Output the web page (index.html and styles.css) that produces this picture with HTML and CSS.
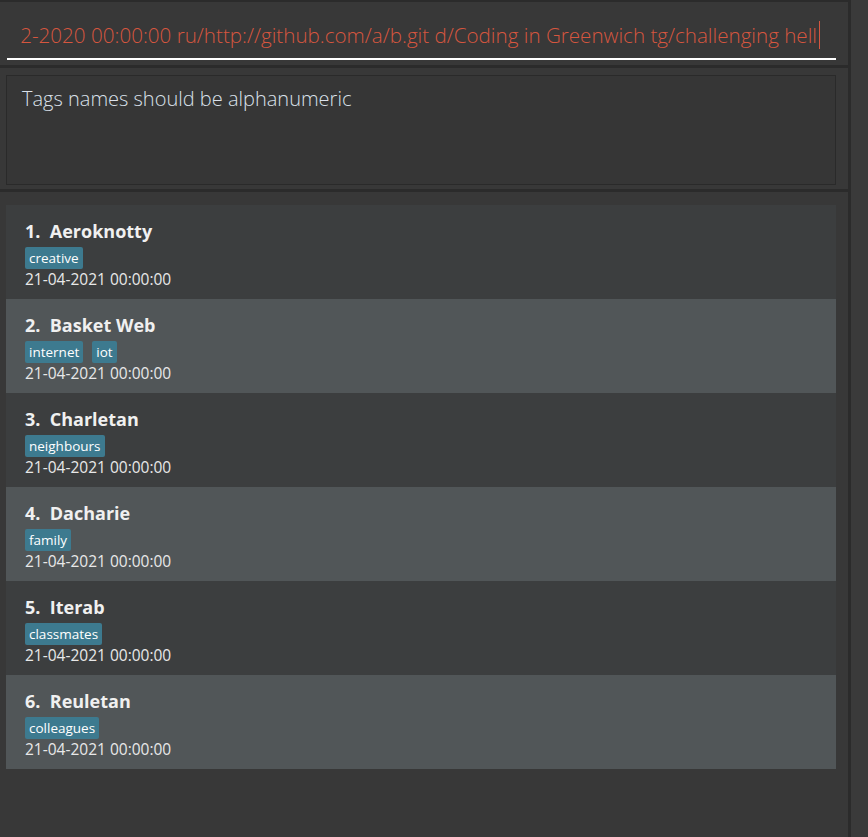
FILE: index.html
```html
<!DOCTYPE html>
<html>
<head>
<meta charset="utf-8">
<link rel="stylesheet" href="styles.css">
</head>
<body>
<div class="app">
  <div class="main">
    <div class="panel command-panel">
      <div class="command-box">
        <div class="command-text"><span>edit 1 n/Hello dl/01-02-2020 00:00:00 ru/http://github.com/a/b.git d/Coding in Greenwich tg/challenging hell</span><span class="caret"></span></div>
      </div>
    </div>
    <div class="panel result-panel">
      <div class="result-box">Tags names should be alphanumeric</div>
    </div>
    <div class="panel list-panel">
      <div class="list">
        <div class="card odd">
          <div class="name">1.&nbsp; Aeroknotty</div>
          <div class="tags"><span class="tag">creative</span></div>
          <div class="date">21-04-2021 00:00:00</div>
        </div>
        <div class="card even">
          <div class="name">2.&nbsp; Basket Web</div>
          <div class="tags"><span class="tag">internet</span><span class="tag">iot</span></div>
          <div class="date">21-04-2021 00:00:00</div>
        </div>
        <div class="card odd">
          <div class="name">3.&nbsp; Charletan</div>
          <div class="tags"><span class="tag">neighbours</span></div>
          <div class="date">21-04-2021 00:00:00</div>
        </div>
        <div class="card even">
          <div class="name">4.&nbsp; Dacharie</div>
          <div class="tags"><span class="tag">family</span></div>
          <div class="date">21-04-2021 00:00:00</div>
        </div>
        <div class="card odd">
          <div class="name">5.&nbsp; Iterab</div>
          <div class="tags"><span class="tag">classmates</span></div>
          <div class="date">21-04-2021 00:00:00</div>
        </div>
        <div class="card even">
          <div class="name">6.&nbsp; Reuletan</div>
          <div class="tags"><span class="tag">colleagues</span></div>
          <div class="date">21-04-2021 00:00:00</div>
        </div>
      </div>
    </div>
  </div>
  <div class="divider"></div>
  <div class="side"></div>
</div>
</body>
</html>
```

FILE: styles.css
```css
html, body {
  margin: 0;
  padding: 0;
  height: 100%;
  background: #383838;
  font-family: "Open Sans", "Noto Sans", sans-serif;
}

.app {
  display: flex;
  height: 837px;
  overflow: hidden;
}

.main {
  width: 848px;
  display: flex;
  flex-direction: column;
  background: #2b2b2b;
}

.divider {
  width: 3px;
  background: #2b2b2b;
}

.side {
  flex: 1;
  background: #3a3a3a;
}

.panel {
  background: #383838;
}

.command-panel {
  margin-top: 2px;
  height: 63px;
  padding: 0 12px 0 7px;
  box-sizing: border-box;
}

.command-box {
  height: 58px;
  border-bottom: 2px solid #ffffff;
  display: flex;
  align-items: center;
  overflow: hidden;
  box-sizing: border-box;
  padding-top: 10px;
  padding-left: 13px;
}

.command-text {
  display: flex;
  align-items: center;
  justify-content: flex-end;
  width: 800px;
  white-space: nowrap;
  overflow: hidden;
  color: #d6563f;
  font-size: 20.6px;
  font-weight: 300;
}

.command-text span:first-child {
  flex-shrink: 0;
}

.caret {
  flex-shrink: 0;
  width: 1px;
  height: 28px;
  background: #d6563f;
  margin-left: 2px;
}

.result-panel {
  margin-top: 3px;
  height: 121px;
  padding: 7px 12px 5px 6px;
  box-sizing: border-box;
}

.result-box {
  height: 110px;
  box-sizing: border-box;
  border: 1px solid #2a2a2a;
  background: #363636;
  color: #dae1ea;
  font-size: 20px;
  font-weight: 300;
  padding: 9px 15px;
}

.list-panel {
  margin-top: 3px;
  flex: 1;
  padding: 13px 12px 0 6px;
}

.list {
  display: flex;
  flex-direction: column;
}

.card {
  height: 94px;
  box-sizing: border-box;
  padding: 13px 19px 0;
  color: #f0f0f0;
}

.card.odd {
  background: #3c3e3f;
}

.card.even {
  background: #515658;
}

.name {
  font-size: 18px;
  font-weight: 700;
  line-height: 26px;
}

.tags {
  display: flex;
  gap: 9px;
  margin-top: 3px;
}

.tag {
  background: #3d7a8f;
  color: #ffffff;
  font-size: 13.5px;
  line-height: 22px;
  padding: 0 4px;
  border-radius: 2px;
}

.date {
  font-size: 15.5px;
  line-height: 20px;
  color: #e8e8e8;
}
```
